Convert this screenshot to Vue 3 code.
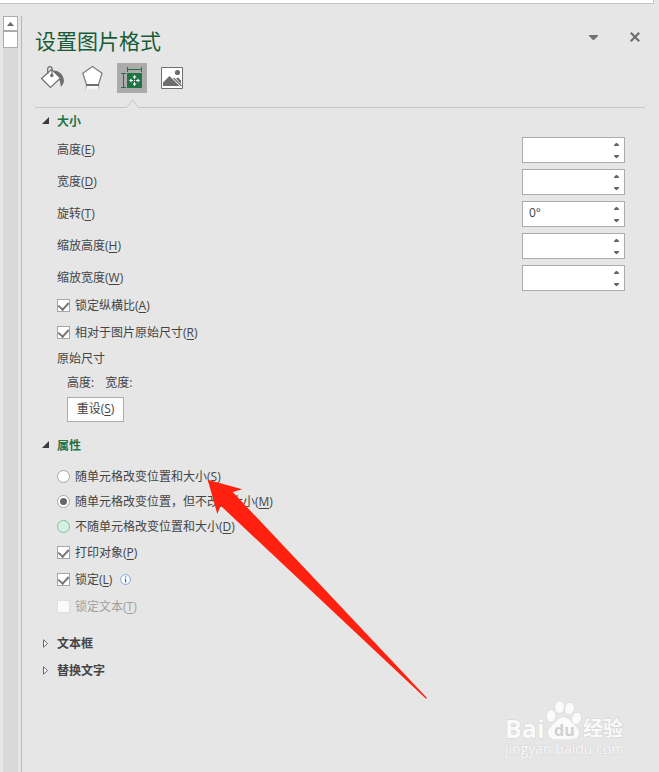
<script setup>
import { reactive, ref } from 'vue'

const tab = ref('size')
const tabs = [
  { id: 'fill', label: '填充与线条' },
  { id: 'effects', label: '效果' },
  { id: 'size', label: '大小与属性' },
  { id: 'picture', label: '图片' },
]

const fields = reactive([
  { id: 'height', text: '高度', key: 'E', value: '' },
  { id: 'width', text: '宽度', key: 'D', value: '' },
  { id: 'rotation', text: '旋转', key: 'T', value: '0°' },
  { id: 'scale-height', text: '缩放高度', key: 'H', value: '' },
  { id: 'scale-width', text: '缩放宽度', key: 'W', value: '' },
])

const scaleOptions = reactive([
  { id: 'ratio', text: '锁定纵横比', key: 'A', checked: true },
  { id: 'relative', text: '相对于图片原始尺寸', key: 'R', checked: true },
])

const placement = ref('move')
const placements = [
  { id: 'move-size', text: '随单元格改变位置和大小', key: 'S' },
  { id: 'move', text: '随单元格改变位置，但不改变大小', key: 'M' },
  { id: 'none', text: '不随单元格改变位置和大小', key: 'D', hot: true },
]

const properties = reactive([
  { id: 'print', text: '打印对象', key: 'P', checked: true },
  { id: 'locked', text: '锁定', key: 'L', checked: true, info: true },
  { id: 'lock-text', text: '锁定文本', key: 'T', checked: false, disabled: true },
])
</script>

<template>
  <div class="window">
    <div class="sheet-edge"></div>
    <div class="body">
      <div class="scrollbar">
        <button class="scroll-up" type="button" aria-label="向上滚动">
          <svg width="7" height="4" viewBox="0 0 7 4"><path d="M0 4 3.5 0 7 4z" fill="#666" /></svg>
        </button>
        <div class="thumb"></div>
      </div>

      <main class="pane">
        <header class="title-bar">
          <h1>设置图片格式</h1>
          <button class="plain menu" type="button" aria-label="任务窗格选项">
            <svg width="9" height="5" viewBox="0 0 9 5"><path d="M0 0h9v1L5 5H4L0 1z" fill="#737373" /></svg>
          </button>
          <button class="plain" type="button" aria-label="关闭">
            <svg width="10" height="10" viewBox="0 0 10 10"><path d="M.8.8 9.2 9.2M9.2.8.8 9.2" stroke="#6e6e6e" stroke-width="2.2" /></svg>
          </button>
        </header>

        <nav class="tabs">
          <button
            v-for="t in tabs" :key="t.id" type="button" class="tab"
            :class="{ active: tab === t.id }" :aria-label="t.label" @click="tab = t.id"
          >
            <svg v-if="t.id === 'fill'" width="30" height="30" viewBox="0 0 30 30">
              <path d="M17 7.500c5 .5 8.500 3.500 9.600 8 .8 3 .3 5.500-2.800 8.500-.3-4-.6-7-3.300-9.500z" fill="#6d6d6d" />
              <path d="M14.500 6.500 23.500 15 13.500 24.500 4.500 15.500z" fill="#fff" stroke="#6d6d6d" stroke-width="1.200" />
              <path d="M10.700 11V5.800c0-3 4.300-3 4.300 0V12" fill="none" stroke="#6d6d6d" stroke-width="1.200" />
              <circle cx="14.800" cy="12.500" r="1.700" fill="#6d6d6d" />
            </svg>
            <svg v-else-if="t.id === 'effects'" width="30" height="30" viewBox="0 0 30 30">
              <defs>
                <linearGradient id="reflection" x1="0" y1="0" x2="0" y2="1">
                  <stop offset="0" stop-color="#fff" />
                  <stop offset="1" stop-color="#e6e6e6" />
                </linearGradient>
                <linearGradient id="reflection-edge" x1="0" y1="0" x2="0" y2="1">
                  <stop offset="0" stop-color="#999" />
                  <stop offset="1" stop-color="#e0e0e0" />
                </linearGradient>
              </defs>
              <path d="M9 23h13l1 4.500H8z" fill="url(#reflection-edge)" />
              <path d="M10 23h11l1 4.500H9z" fill="url(#reflection)" />
              <path d="M15.500 3.600 25 10.300 21.500 21.500h-12L5.800 10.300z" fill="#fff" stroke="#7a7a7a" stroke-width="1.200" />
              <path d="M9 22h13" stroke="#6d6d6d" stroke-width="2" />
            </svg>
            <svg v-else-if="t.id === 'size'" width="30" height="30" viewBox="0 0 30 30">
              <path d="M10 10h15v15H10z" fill="#217346" />
              <path d="M10.500 4v5M24.500 4v5M10.500 6.500h14M4 10.500h5M4 24.500h5M6.500 10.500v14" fill="none" stroke="#217346" />
              <path d="M17.500 13v3M17.500 19v3M13 17.500h3M19 17.500h3M17 17.500h1" stroke="#fff" />
              <path d="M17.500 12 19.500 14.500h-4zM17.500 23 19.500 20.500h-4zM12 17.500 14.500 15.500v4zM23 17.500 20.500 15.500v4z" fill="#fff" />
            </svg>
            <svg v-else width="30" height="30" viewBox="0 0 30 30">
              <path d="M4.500 4.500h21v21h-21z" fill="#fff" stroke="#6d6d6d" />
              <circle cx="20.500" cy="9.500" r="2.600" fill="#6d6d6d" />
              <path d="M6 23v-3.500l6.500-6.500 10 10zM19 15.500l2-1 3 3V21z" fill="#6d6d6d" />
              <path d="M16.500 15 24.500 23" stroke="#6d6d6d" stroke-width="1.200" />
            </svg>
          </button>
        </nav>
        <div class="divider">
          <svg class="notch" width="13" height="9" viewBox="0 0 13 9">
            <path d="M0 8.500h1L6.500 1 12 8.500h1V9H0z" fill="#e6e6e6" />
            <path d="M0 8.500h.5L6.500.8 12.500 8.500h.5" fill="none" stroke="#c6c6c6" />
          </svg>
        </div>

        <section>
          <h2 class="open">
            <button type="button">
              <svg width="7" height="7" viewBox="0 0 7 7"><path d="M7 0v7H0z" fill="#3b3b3b" /></svg>大小
            </button>
          </h2>
          <div class="content fields">
            <div v-for="f in fields" :key="f.id" class="field">
              <label :for="f.id">{{ f.text }}(<u>{{ f.key }}</u>)</label>
              <div class="spin">
                <input :id="f.id" v-model="f.value" type="text" />
                <div class="steppers">
                  <button type="button" :aria-label="f.text + '增加'">
                    <svg width="5" height="3" viewBox="0 0 5 3"><path d="M0 3V2l2-2h1l2 2v1z" fill="#666" /></svg>
                  </button>
                  <button type="button" :aria-label="f.text + '减少'">
                    <svg width="5" height="3" viewBox="0 0 5 3"><path d="M0 0v1l2 2h1l2-2V0z" fill="#666" /></svg>
                  </button>
                </div>
              </div>
            </div>
          </div>
          <div class="content scaling">
            <label v-for="o in scaleOptions" :key="o.id" class="check">
              <input v-model="o.checked" type="checkbox" />
              <span>{{ o.text }}(<u>{{ o.key }}</u>)</span>
            </label>
            <p>原始尺寸</p>
            <div class="original">
              <p class="pair"><span>高度:</span><span>宽度:</span></p>
              <button class="reset" type="button">重设(<u>S</u>)</button>
            </div>
          </div>
        </section>

        <section class="spaced">
          <h2 class="open">
            <button type="button">
              <svg width="7" height="7" viewBox="0 0 7 7"><path d="M7 0v7H0z" fill="#3b3b3b" /></svg>属性
            </button>
          </h2>
          <div class="content properties">
            <label v-for="p in placements" :key="p.id" class="radio" :class="{ hot: p.hot }">
              <input v-model="placement" type="radio" name="placement" :value="p.id" />
              <span>{{ p.text }}(<u>{{ p.key }}</u>)</span>
            </label>
            <label v-for="o in properties" :key="o.id" class="check" :class="{ disabled: o.disabled }">
              <input v-model="o.checked" type="checkbox" :disabled="o.disabled" />
              <span>{{ o.text }}(<u>{{ o.key }}</u>)</span>
              <svg v-if="o.info" class="info" width="11" height="11" viewBox="0 0 11 11">
                <circle cx="5.500" cy="5.500" r="4.900" fill="#fff" stroke="#7da3d8" />
                <path d="M5 2.500h1.200v1.200H5zM4.500 4.700h1.700v3.800H5v-3h-.5z" fill="#2f6fc4" />
              </svg>
            </label>
          </div>
        </section>

        <section class="spaced">
          <h2 v-for="name in ['文本框', '替换文字']" :key="name">
            <button type="button">
              <svg width="7" height="9" viewBox="0 0 7 9"><path d="M1.500.8v7.400L5.500 4.500z" fill="#fff" stroke="#666" /></svg>{{ name }}
            </button>
          </h2>
        </section>
      </main>
    </div>

    <svg class="pointer" width="220" height="220" viewBox="207 479 220 220">
      <path d="M207.700 479.700 242.300 489.300 232.700 492 427 698 426 698.700 220.700 505.700 217.300 514z" fill="#ff2010" />
    </svg>

    <svg class="watermark" width="124" height="62" viewBox="0 0 124 62">
      <g class="mark">
        <text class="bai" x="2" y="38">Bai</text>
        <ellipse cx="48" cy="16" rx="4.500" ry="6" />
        <ellipse cx="56.500" cy="7" rx="4.500" ry="6" />
        <ellipse cx="66.500" cy="8.500" rx="4.500" ry="6" transform="rotate(10 66.500 8.500)" />
        <ellipse cx="73.500" cy="18.500" rx="4.500" ry="6" transform="rotate(15 73.500 18.500)" />
        <path d="M60.500 17c5 0 7 4 10 7 4 4 7.500 7 5 11.500-2.500 5-8.500 4-15 4s-12.500 1-15-4c-2.500-5 1.500-8 5-11.500 3.500-3 5-7 10-7z" />
        <text class="jingyan" x="80" y="36">经验</text>
        <text class="site" x="2" y="54">jingyan.baidu.com</text>
      </g>
      <text class="du" x="51" y="36">du</text>
    </svg>
  </div>
</template>

<style>
body {
  background: #e6e6e6;
}
</style>

<style scoped>
.window {
  position: relative;
  display: flex;
  flex-direction: column;
  min-height: 100vh;
  overflow: hidden;
  background: #e6e6e6;
  color: #444;
  font: 12px/16px "Open Sans", "Noto Sans CJK SC", sans-serif;
}
* {
  box-sizing: border-box;
}
h1, h2, p {
  margin: 0;
  font-weight: 400;
}
button, input {
  margin: 0;
  padding: 0;
  border: 0;
  background: none;
  color: inherit;
  font: inherit;
}
svg {
  display: block;
  flex: none;
}
u {
  text-underline-offset: 2px;
}
.sheet-edge {
  height: 4px;
  margin-right: 5px;
  border: solid #c3c3c3;
  border-width: 0 1px 1px 0;
  background: #fff;
}
.body {
  display: flex;
  flex: 1;
  padding: 12px 0 0 3px;
}
.scrollbar {
  width: 15px;
  margin-right: 3px;
  background: #d9d9d9;
}
.scroll-up {
  display: flex;
  align-items: center;
  justify-content: center;
  width: 15px;
  height: 15px;
  border: 1px solid #ababab;
  background: #fff;
}
.thumb {
  height: 17px;
  border: 1px solid #ababab;
  background: #fff;
}
.pane {
  flex: 1;
  padding: 0 14px 0 13px;
  border-left: 1px solid #b8b8b8;
}
.title-bar {
  display: flex;
  align-items: center;
  height: 42px;
  padding: 0 5px 0 0;
}
h1 {
  flex: 1;
  padding-top: 8px;
  color: #185c37;
  font-size: 21px;
  line-height: 30px;
}
.menu {
  margin-right: 32px;
}
.tabs {
  display: flex;
  gap: 10px;
  padding: 5px 2px 14px;
}
.tab {
  width: 30px;
  height: 30px;
}
.tab.active {
  background: #ababab;
}
.divider {
  position: relative;
  height: 1px;
  background: #c6c6c6;
}
.notch {
  position: absolute;
  left: 91px;
  bottom: 0;
}
h2 {
  display: flex;
  align-items: center;
  height: 27px;
  padding-left: 7px;
  font-size: 12px;
}
h2.open {
  height: 26px;
  padding-top: 2px;
  color: #217346;
}
h2.open svg {
  margin-bottom: 4px;
}
h2 button {
  display: flex;
  align-items: center;
  gap: 8px;
  font-weight: 700;
}
.content {
  padding-left: 22px;
}
.fields {
  display: grid;
  gap: 6px;
  padding-top: 3px;
  padding-right: 20px;
}
.scaling {
  padding-top: 1px;
}
.field {
  display: flex;
  align-items: center;
  justify-content: space-between;
}
.spin {
  display: flex;
  width: 103px;
  height: 26px;
  border: 1px solid #ababab;
  background: #fff;
}
.spin input {
  flex: 1;
  min-width: 0;
  padding: 0 6px 2px;
}
.steppers {
  display: grid;
  grid-template-rows: 12px 12px;
  width: 15px;
}
.steppers button {
  display: flex;
  align-items: center;
  justify-content: center;
}
.check, .radio {
  display: flex;
  align-items: center;
  height: 27px;
  gap: 5px;
}
.radio {
  height: 25px;
}
.check input, .radio input {
  display: grid;
  place-items: center;
  width: 13px;
  height: 13px;
  appearance: none;
  border: 1px solid #a6a6a6;
  background: #fff;
}
.check input:checked::before {
  content: "";
  width: 5px;
  height: 8px;
  margin-bottom: 2px;
  border: solid #777;
  border-width: 0 2px 2px 0;
  transform: rotate(42deg);
}
.radio input {
  border-radius: 50%;
}
.radio input:checked::before {
  content: "";
  width: 7px;
  height: 7px;
  border-radius: 50%;
  background: #666;
}
.radio.hot input {
  border-color: #86bfa0;
  background: #d3f0e0;
}
.check.disabled {
  color: #a0a0a0;
}
.check.disabled input {
  border-color: #e0e0e0;
  background: #fafafa;
}
.info {
  margin-left: 3px;
}
p {
  padding-top: 1px;
  line-height: 24px;
}
.original {
  padding-left: 10px;
}
.pair {
  display: flex;
  gap: 11px;
  padding-top: 0;
}
.reset {
  width: 57px;
  height: 25px;
  margin-top: 2px;
  padding-bottom: 1px;
  border: 1px solid #ababab;
  background: #fdfdfd;
}
.spaced {
  padding-top: 10px;
}
.properties {
  padding-top: 6px;
}
.pointer {
  position: absolute;
  left: 207px;
  top: 479px;
  pointer-events: none;
}
.watermark {
  position: absolute;
  left: 503px;
  top: 700px;
}
.mark {
  fill: #fafafa;
  stroke: #d4d4d4;
  stroke-width: 1px;
  paint-order: stroke;
}
.bai {
  font: 700 25px "Open Sans", sans-serif;
}
.jingyan {
  font: 700 20px "Noto Sans CJK SC", sans-serif;
}
.site {
  font: 14px "Open Sans", sans-serif;
}
.du {
  fill: #d0d0d0;
  font: 700 16px "Open Sans", sans-serif;
}
</style>
